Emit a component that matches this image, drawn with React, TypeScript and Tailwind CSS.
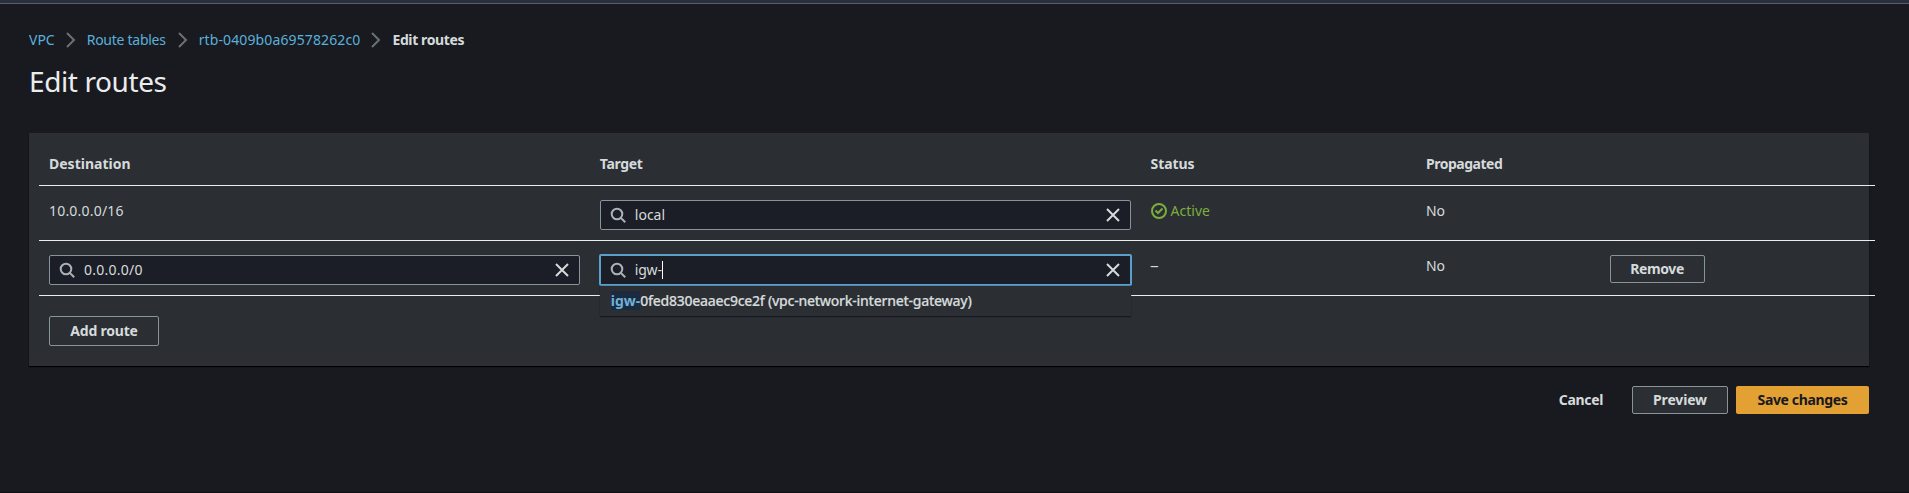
import type { ReactNode } from "react";

function SearchIcon() {
  return (
    <svg className="ml-[9px] size-4 shrink-0" viewBox="0 0 16 16" fill="none" stroke="#aab4b5" strokeWidth="2">
      <circle cx="7" cy="7" r="5.3" />
      <path d="M15.2 15.2l-4.6-4.6" />
    </svg>
  );
}

function CloseIcon() {
  return (
    <svg className="mr-[9px] ml-auto size-4 shrink-0" viewBox="0 0 16 16" fill="none" stroke="#d5dbdb" strokeWidth="2">
      <path d="M2 2l12 12M14 2L2 14" />
    </svg>
  );
}

function Separator() {
  return (
    <svg className="mx-2 size-4 shrink-0" viewBox="0 0 16 16" fill="none" stroke="#687078" strokeWidth="2">
      <path d="M4 1l7 7-7 7" />
    </svg>
  );
}

function Field({ children }: { children: ReactNode }) {
  return (
    <div className="flex h-[30px] w-full items-center rounded-[2px] border border-[#879596] bg-[#1c1e27]">
      <SearchIcon />
      {children}
      <CloseIcon />
    </div>
  );
}

const columns = "grid grid-cols-[30%_30%_15%_10%_15%] border-b border-[#eaeded]";

export default function App() {
  return (
    <div className="h-[493px] w-full overflow-hidden border-b border-[#0f1014] bg-[#191a1f] font-['Noto_Sans',sans-serif] text-[14px] leading-[22px] whitespace-nowrap text-[#d5dbdb]">
      <div className="h-1 border-b border-[#5a5c66] bg-[#2a2f3f]" />
      <div className="pr-10 pl-[29px]">
        <nav className="mt-[25px] flex h-[22px] items-center text-[#5ab0dc]">
          <span>VPC</span>
          <Separator />
          <span className="mr-px tracking-[-0.27px]">Route tables</span>
          <Separator />
          <span className="tracking-[0.12px]">rtb-0409b0a69578262c0</span>
          <Separator />
          <span className="font-bold tracking-[-0.38px] text-[#d5dbdb]">Edit routes</span>
        </nav>
        <h1 className="mt-3 h-9 text-[28px] leading-9 tracking-[-0.4px] text-[#eaeded]">Edit routes</h1>
        <main className="mt-[34px] h-[233px] bg-[#2b2e33] pl-[10px] shadow-[0_1px_1px_#000]">
          <div className="w-[1836px]">
            <div className={columns + " h-[53px] pt-5 font-bold"}>
              <span className="pl-[10px]">Destination</span>
              <span className="pl-[10px] tracking-[-0.35px]">Target</span>
              <span className="pl-[10px] tracking-[-0.1px]">Status</span>
              <span className="pl-[10px] tracking-[-0.48px]">Propagated</span>
            </div>
            <div className={columns + " h-[55px] pt-[14px]"}>
              <span className="pl-[10px] tracking-[0.2px]">10.0.0.0/16</span>
              <div className="px-[10px]">
                <Field>
                  <span className="ml-[9px]">local</span>
                </Field>
              </div>
              <span className="flex h-[22px] items-center gap-1 pl-[10px] text-[#7aae3e]">
                <svg className="size-4" viewBox="0 0 16 16" fill="none" stroke="currentColor" strokeWidth="2">
                  <circle cx="8" cy="8" r="7" />
                  <path d="M4.5 7.5L7 10l4.5-4.5" />
                </svg>
                Active
              </span>
              <span className="pl-[10px]">No</span>
            </div>
            <div className={columns + " h-[55px] pt-[14px]"}>
              <div className="px-[10px]">
                <Field>
                  <span className="ml-[9px] tracking-[0.25px]">0.0.0.0/0</span>
                </Field>
              </div>
              <div className="relative px-[10px]">
                <div className="-m-px flex h-8 items-center rounded-[2px] border-2 border-[#5b9fcb] bg-[#1c1e27]">
                  <SearchIcon />
                  <span className="ml-[9px] tracking-[-0.2px]">igw-</span>
                  <span className="h-[18px] w-px bg-white" />
                  <CloseIcon />
                </div>
                <div className="absolute top-[31px] right-[10px] left-[10px] h-[31px] border-b border-[#16191f] bg-[#2b2e33] pl-[11px] leading-[30px] font-medium shadow-[0_0_1px_#16191f]">
                  <span className="bg-[#1b2b3f] font-bold text-[#6fb1d8]">igw-</span>
                  <span className="tracking-[-0.26px] [-webkit-text-stroke:0.2px_#d5dbdb]">0fed830eaaec9ce2f (vpc-network-internet-gateway)</span>
                </div>
              </div>
              <span className="pl-[9px]">
                <span className="inline-block origin-left scale-x-125">–</span>
              </span>
              <span className="pl-[10px]">No</span>
              <div className="pl-[10px]">
                <button className="h-7 w-[95px] rounded-[2px] border border-[#879596] font-bold tracking-[-0.4px]">Remove</button>
              </div>
            </div>
          </div>
          <button className="mt-5 ml-[10px] h-[30px] w-[110px] rounded-[2px] border border-[#879596] font-bold tracking-[-0.2px]">Add route</button>
        </main>
        <footer className="mt-5 flex h-7 items-center justify-end font-bold">
          <button className="mr-[29px] tracking-[-0.35px]">Cancel</button>
          <button className="mr-2 h-7 w-24 rounded-[2px] border border-[#879596] bg-[#2b2e33] tracking-[-0.15px]">Preview</button>
          <button className="h-7 w-[133px] rounded-[2px] bg-[#e3a033] tracking-[-0.35px] text-[#16191f]">Save changes</button>
        </footer>
      </div>
    </div>
  );
}
